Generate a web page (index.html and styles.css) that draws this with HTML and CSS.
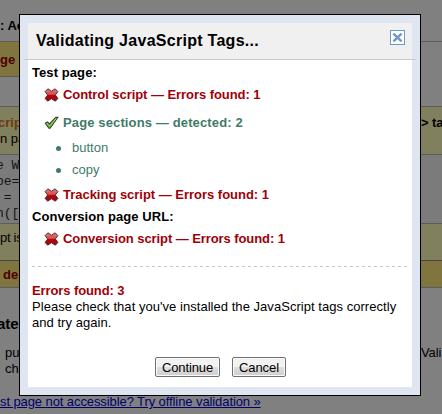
FILE: index.html
```html
<!DOCTYPE html>
<html lang="en">
<head>
<meta charset="utf-8">
<title>Validating JavaScript Tags</title>
<link rel="stylesheet" href="styles.css">
</head>
<body>
<svg width="0" height="0" class="defs">
  <defs>
    <linearGradient id="red" x1="0" y1="0" x2="0" y2="1"><stop offset="0" stop-color="#f08080"/><stop offset=".45" stop-color="#d84a50"/><stop offset=".52" stop-color="#b80810"/><stop offset="1" stop-color="#a80008"/></linearGradient>
    <linearGradient id="green" x1="0" y1="0" x2="0" y2="1"><stop offset="0" stop-color="#d2efa8"/><stop offset="1" stop-color="#5fae2c"/></linearGradient>
    <symbol id="cross" viewBox="0 0 14 14"><path d="M3.4 .8 7 3.3 10.6.8 13.4 3.6 10.8 7 13.4 10.4 10.8 13.2 7 10.7 3.2 13.2 .6 10.4 3.2 7 .6 3.6Z" fill="url(#red)" stroke="#4b3030" stroke-width="1" stroke-linejoin="round"/></symbol>
    <symbol id="check" viewBox="0 0 14 14"><path d="M.8 7.3 2.9 5.9 5 8 11.2 1.4 13.5 1.2 5.6 12.3 4.4 12.3Z" fill="url(#green)" stroke="#2d4522" stroke-width="1.1" stroke-linejoin="round"/></symbol>
  </defs>
</svg>
<div class="page">
  <div class="row heading"><b>: Ac</b></div>
  <div class="row gold short"><b class="red">ge</b></div>
  <div class="row plain"></div>
  <div class="row olive script"><div class="l"><b class="orange">crip</b><br>n pa</div><b class="r">&gt; ta</b></div>
  <pre class="row code">e W
pe=
 =
n([</pre>
  <div class="row olive note"><span>pt is</span></div>
  <div class="row gold sum"><b class="red">de</b></div>
  <div class="row sub"><b>ate</b></div>
  <div class="row para"><div class="l">pu<br>ch</div><span class="r">Vali</span></div>
  <div class="row foot"><a>st page not accessible? Try offline validation »</a></div>
</div>
<div class="dialog">
  <div class="head"><h1>Validating JavaScript Tags...</h1>
    <svg class="close" viewBox="0 0 15 15"><rect x=".5" y=".5" width="14" height="14" fill="#fff" stroke="#7099c5"/><path d="M3.4 3.6 11.6 11.4M11.6 3.6 3.4 11.4" stroke="#7099c5" stroke-width="2.5"/></svg>
  </div>
  <div class="body">
    <div class="title">Test page:</div>
    <div class="item bad"><svg><use href="#cross"/></svg><span class="s1">Control script — Errors found: 1</span></div>
    <div class="item good"><svg><use href="#check"/></svg><span class="s2">Page sections — detected: 2</span></div>
    <ul><li>button</li><li>copy</li></ul>
    <div class="item bad track"><svg><use href="#cross"/></svg><span class="s3">Tracking script — Errors found: 1</span></div>
    <div class="title conv">Conversion page URL:</div>
    <div class="item bad"><svg><use href="#cross"/></svg><span class="s4">Conversion script — Errors found: 1</span></div>
    <div class="rule"></div>
    <div class="found">Errors found: 3</div>
    <p>Please check that you've installed the JavaScript tags correctly<br>and try again.</p>
    <div class="buttons"><button>Continue</button><button class="cancel">Cancel</button></div>
  </div>
</div>
</body>
</html>
```

FILE: styles.css
```css
* { box-sizing: border-box; }
body { margin: 0; width: 442px; height: 414px; overflow: hidden; background: #808080; font: 13px/16px "Liberation Sans", Arial, sans-serif; color: #000; position: relative; }
.defs { position: absolute; }
.page { width: 442px; height: 414px; overflow: hidden; }
.row { display: flex; white-space: nowrap; overflow: hidden; border-bottom: 1px solid #5c5c5c; }
.row .l { width: 421px; flex: none; }
.heading { height: 42px; padding-top: 18px; font-size: 13px; }
.gold { background: #80743f; }
.short { height: 35px; width: 400px; padding-top: 10px; }
.red { color: #4d0000; }
.orange { color: #70380c; margin-left: -2px; }
.plain { height: 30px; }
.olive { background: #80805f; }
.script { height: 48px; padding-top: 8px; }
.script .r { letter-spacing: -0.1px; }
.code { margin: 0 0 0 -4px; height: 69px; padding-top: 3px; background: #7b7b7b; color: #141414; font: 13px/16px "Liberation Mono", monospace; white-space: pre; }
.note { height: 37px; padding-top: 6px; border-color: #454545; letter-spacing: -0.3px; }
.sum { height: 27px; padding: 6px 0 0 3px; }
.sub { height: 57px; padding-top: 28px; border: 0; margin-left: -3px; font-size: 15px; }
.para { height: 49px; border: 0; padding-left: 5px; }
.para .l { width: 416px; }
.para .r { letter-spacing: -0.1px; }
.foot { border: 0; padding-top: 0; }
.foot a { color: #00006c; text-decoration: underline; letter-spacing: -0.09px; }
.dialog { position: absolute; left: 19px; top: 14px; width: 402px; height: 382px; border: 1px solid #000; background: #dfe5f1; padding: 8px 4px; }
.head { height: 37px; border-bottom: 1px solid #c9c9cd; padding: 0 7px 0 12px; background: linear-gradient(#f0f0f0, #f0f0f0) 4px 0 / 384px 36px no-repeat; display: flex; justify-content: space-between; }
h1 { margin: 8px 0 0; font: bold 16px/19px "Liberation Sans", Arial, sans-serif; white-space: nowrap; letter-spacing: 0.28px; }
.close { width: 15px; height: 15px; margin: 7px 4px 0 0; }
.body { margin: 0 4px; height: 327px; background: #fff; padding: 5px 4px 0; white-space: nowrap; }
.title { font-weight: bold; height: 16px; letter-spacing: 0.08px; }
.item { display: flex; height: 16px; margin-top: 6px; padding-left: 12px; font-weight: bold; align-items: center; }
.item svg { width: 15px; height: 14px; margin-right: 4px; flex: none; }
.s1 { letter-spacing: -0.06px; }
.s2 { letter-spacing: 0.13px; }
.s3 { letter-spacing: -0.02px; }
.s4 { letter-spacing: -0.08px; }
.bad, .found { color: #a00007; }
.found { letter-spacing: -0.1px; }
.good { color: #3f7b68; margin-top: 12px; }
ul { margin: 9px 0 0; padding: 0 0 0 40px; list-style: none; color: #3f7b68; }
li { height: 16px; margin-bottom: 6px; position: relative; }
li::before { content: ""; position: absolute; left: -16px; top: 6px; width: 5px; height: 5px; border-radius: 50%; background: #3f7b68; }
.track { margin-top: 9px; }
.conv { margin-top: 6px; }
.rule { height: 1px; margin: 19px 0 16px; width: 376px; background: repeating-linear-gradient(90deg, #c8c8c8 0 3px, #fff 3px 6px); }
.found { font-weight: bold; }
p { margin: 0; letter-spacing: 0.04px; }
.buttons { display: flex; gap: 12px; margin: 26px 0 0 123px; }
button { font: 13px/15px "Liberation Sans", Arial, sans-serif; color: #000; width: 65px; height: 20px; padding: 1px 0 0; border: 1px solid #707070; border-radius: 2px; box-shadow: inset 0 0 0 1px #fbfbfb; background: linear-gradient(#f2f2f2 0 48%, #dedede 52%, #cfcfcf); letter-spacing: -0.1px; }
.cancel { width: 54px; }
```
